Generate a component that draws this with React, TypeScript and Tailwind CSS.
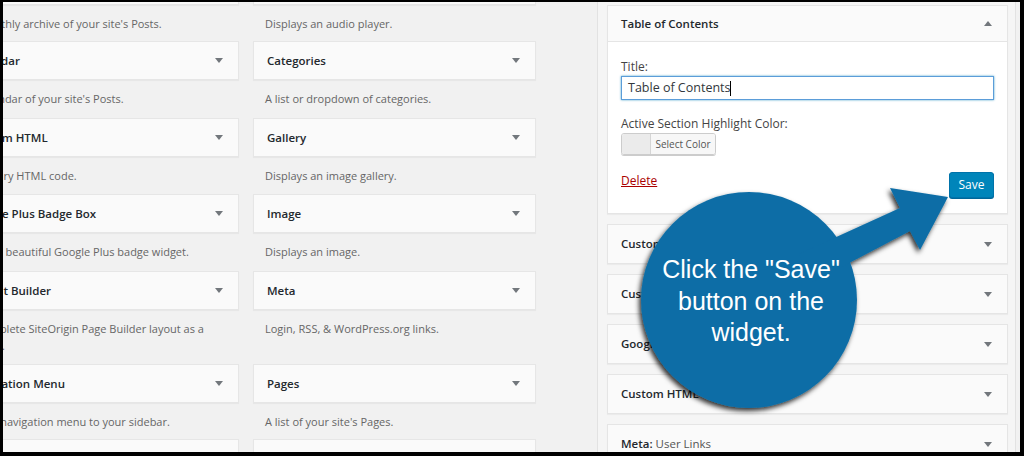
import React from 'react';

const wp = "font-['Open_Sans','Noto_Sans',sans-serif]";

function Caret({ up = false }: { up?: boolean }) {
  return (
    <svg width="8" height="5" viewBox="0 0 8 5" className="shrink-0">
      <polygon points={up ? '0,5 8,5 4,0' : '0,0 8,0 4,5'} fill="#72777c" />
    </svg>
  );
}

interface Widget {
  title: string;
  desc: string;
}

const leftCol: Widget[] = [
  { title: 'Archives', desc: "A monthly archive of your site's Posts." },
  { title: 'Calendar', desc: "A calendar of your site's Posts." },
  { title: 'Custom HTML', desc: 'Arbitrary HTML code.' },
  { title: 'Google Plus Badge Box', desc: 'Adds a beautiful Google Plus badge widget.' },
  { title: 'Layout Builder', desc: 'A complete SiteOrigin Page Builder layout as a widget.' },
  { title: 'Navigation Menu', desc: 'Add a navigation menu to your sidebar.' },
  { title: 'Page Builder', desc: '' },
];

const rightCol: Widget[] = [
  { title: 'Audio', desc: 'Displays an audio player.' },
  { title: 'Categories', desc: 'A list or dropdown of categories.' },
  { title: 'Gallery', desc: 'Displays an image gallery.' },
  { title: 'Image', desc: 'Displays an image.' },
  { title: 'Meta', desc: 'Login, RSS, & WordPress.org links.' },
  { title: 'Pages', desc: "A list of your site's Pages." },
  { title: 'Recent Posts', desc: '' },
];

const descHeights = ['h-[36px]', 'h-[37.67px]', 'h-[37.67px]', 'h-[37.67px]', 'h-[54px]', 'h-[36px]', 'h-[36px]'];

function WidgetBox({ title }: { title: string }) {
  return (
    <div className="h-[39px] shrink-0 flex items-center justify-between pl-[13px] pr-[15px] bg-[#fafafa] border border-[#e6e6e6] shadow-[0_1px_1px_rgba(0,0,0,0.04)]">
      <span className="text-[11.5px] font-semibold text-[#23282d] whitespace-nowrap">{title}</span>
      <Caret />
    </div>
  );
}

function Column({ items }: { items: Widget[] }) {
  return (
    <div className="w-[283px] shrink-0 flex flex-col -mt-[36px]">
      {items.map((w, i) => (
        <div key={w.title} className="flex flex-col">
          <WidgetBox title={w.title} />
          <div className={`${descHeights[i]} shrink-0 pt-[10px] px-[12px] text-[11px] leading-[17px] text-[#666]`}>
            {w.desc}
          </div>
        </div>
      ))}
    </div>
  );
}

function Collapsed({ title, sub }: { title: string; sub?: string }) {
  return (
    <div className="mt-[10px] h-[40px] shrink-0 flex items-center justify-between pl-[13px] pr-[15px] bg-[#fafafa] border border-[#e5e5e5] shadow-[0_1px_1px_rgba(0,0,0,0.04)]">
      <span className="text-[11.5px] font-semibold text-[#23282d] whitespace-nowrap">
        {title}
        {sub && <span className="font-normal text-[#555]"> {sub}</span>}
      </span>
      <Caret />
    </div>
  );
}

export default function App() {
  return (
    <div className={`relative w-[1024px] h-[456px] overflow-hidden bg-black pt-[2px] pl-[3px] pr-[4px] pb-[4px] ${wp}`}>
      <div className="relative h-full flex overflow-hidden bg-[#f1f1f1]">
        <div className="flex gap-[14px] -ml-[47px] shrink-0">
          <Column items={leftCol} />
          <Column items={rightCol} />
        </div>

        <div className="ml-[61px] w-[419px] shrink-0 flex flex-col border-x border-[#e2e2e2] bg-[#f5f5f5] pl-[9px] pr-[7px] pt-[3px]">
          <div className="shrink-0 border border-[#e5e5e5] shadow-[0_1px_1px_rgba(0,0,0,0.04)] bg-white">
            <div className="h-[36px] flex items-center justify-between pl-[13px] pr-[15px] bg-[#fafafa] border-b border-[#e5e5e5]">
              <span className="text-[11.5px] font-semibold text-[#23282d]">Table of Contents</span>
              <Caret up />
            </div>
            <div className="px-[13px] pt-[16px] pb-[15px]">
              <div className="text-[12px] leading-[18px] text-[#444]">Title:</div>
              <div className="h-[24px] flex items-center px-[6px] border border-[#5b9dd9] shadow-[0_0_2px_rgba(30,140,190,0.8)] text-[12.5px] text-[#32373c]">
                Table of Contents<span className="inline-block w-px h-[15px] bg-black" />
              </div>
              <div className="mt-[15px] text-[12px] leading-[18px] text-[#444]">Active Section Highlight Color:</div>
              <div className="w-[95px] h-[22px] flex rounded-[3px] border border-[#ccc] shadow-[0_1px_0_#ccc] overflow-hidden">
                <div className="w-[29px] bg-[#ebebeb] border-r border-[#d5d5d5]" />
                <div className="flex-1 flex items-center justify-center bg-[#f7f7f7] text-[10px] text-[#555]">Select Color</div>
              </div>
              <div className="mt-[17px] flex items-start justify-between">
                <span className="text-[12px] leading-[18px] text-[#a00] underline">Delete</span>
                <div className="w-[45px] h-[26px] flex items-center justify-center rounded-[3px] bg-[#0085ba] border border-[#0073aa] shadow-[0_1px_0_#006799] text-[12px] text-white">
                  Save
                </div>
              </div>
            </div>
          </div>
          <Collapsed title="Custom HTML" />
          <Collapsed title="Custom HTML" />
          <Collapsed title="Google Plus Badge Box" />
          <Collapsed title="Custom HTML" />
          <Collapsed title="Meta:" sub="User Links" />
        </div>
      </div>

      <svg className="absolute left-0 top-0 pointer-events-none" width="1024" height="456" viewBox="0 0 1024 456">
        <defs>
          <filter id="callout-shadow" x="-20%" y="-20%" width="140%" height="140%">
            <feDropShadow dx="-2" dy="3" stdDeviation="2.5" floodColor="#000" floodOpacity="0.8" />
          </filter>
        </defs>
        <g filter="url(#callout-shadow)" fill="#0b6da6">
          <circle cx="749" cy="300" r="108" />
          <polygon points="799,254 900,208 890,188 948,197 920,250 910,231 813,282" />
        </g>
      </svg>
      <div className="absolute left-[651px] top-[254px] w-[200px] text-center text-white text-[25px] leading-[31.5px] font-['Liberation_Sans',Arial,sans-serif]">
        Click the "Save" button on the widget.
      </div>
    </div>
  );
}
